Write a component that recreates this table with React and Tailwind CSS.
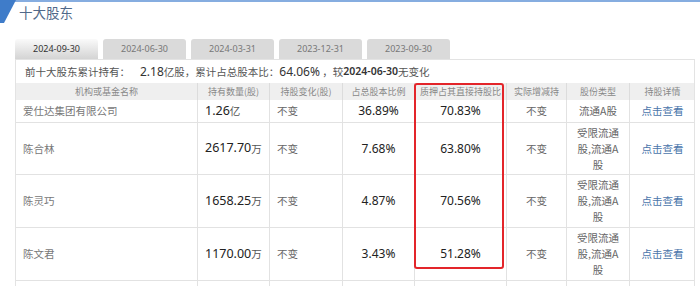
import React from 'react';

const tabs = ['2024-09-30', '2024-06-30', '2024-03-31', '2023-12-31', '2023-09-30'];

const headers = [
  '机构或基金名称',
  '持有数量(股)',
  '持股变化(股)',
  '占总股本比例',
  '质押占其直接持股比',
  '实际增减持',
  '股份类型',
  '持股详情',
];

const rows = [
  { name: '爱仕达集团有限公司', num: '1.26', unit: '亿', ratio: '36.89%', pledge: '70.83%', type: ['流通A股'], h: 'h-[23px]' },
  { name: '陈合林', num: '2617.70', unit: '万', ratio: '7.68%', pledge: '63.80%', type: ['受限流通', '股,流通A', '股'], h: 'h-[52px]' },
  { name: '陈灵巧', num: '1658.25', unit: '万', ratio: '4.87%', pledge: '70.56%', type: ['受限流通', '股,流通A', '股'], h: 'h-[53px]' },
  { name: '陈文君', num: '1170.00', unit: '万', ratio: '3.43%', pledge: '51.28%', type: ['受限流通', '股,流通A', '股'], h: 'h-[53px]' },
];

const cols = 'grid grid-cols-[182px_72px_73px_72px_92px_60px_63px_65px]';
const cjk = "font-['Noto_Sans_CJK_SC',sans-serif]";
const num = "font-['Noto_Sans','Noto_Sans_CJK_SC',sans-serif]";
const cell = 'border-r border-[#e2e2e2]';

const App = () => {
  return (
    <div className={`relative h-[286px] w-[700px] overflow-hidden bg-white ${cjk}`}>
      <div className="h-[2px] w-full bg-[#86ade0]" />
      <svg className="absolute left-0 top-0" width="18" height="24" viewBox="0 0 18 24">
        <polygon points="0,0 16,0 4,23 0,23" fill="#3f7cc9" />
      </svg>

      <div className="pl-[19px] text-[13.5px] leading-[20px] text-[#50698a]">十大股东</div>

      <div className="mt-[17px] flex gap-[5px] pl-[15px]">
        {tabs.map((t, i) => (
          <div
            key={t}
            className={`flex h-[20px] w-[83px] items-center justify-center rounded-t-[3px] text-[9px] ${num} ${
              i === 0
                ? 'bg-gradient-to-b from-[#fafafa] to-[#d4d4d4] text-[#333]'
                : 'bg-[#dadada] text-[#777]'
            }`}
          >
            {t}
          </div>
        ))}
      </div>

      <div className="ml-[15px] w-[680px] border-l border-r border-t border-[#e3e3e3]">
        <div className="flex h-[23px] items-center pl-[9px] text-[10.5px] text-[#555]">
          前十大股东累计持有：
          <span className={`${num} ml-[10px] text-[12px] text-[#333]`}>2.18</span>亿股，累计占总股本比：
          <span className={`${num} text-[12px] text-[#333]`}>64.06%</span>&nbsp;，较
          <span className={`${num} text-[10.5px] font-semibold text-[#333]`}>2024-06-30</span>无变化
        </div>

        <div className={`${cols} h-[17px] bg-[#efefef] text-[9px] leading-[17px] text-[#888]`}>
          {headers.map((h, i) => (
            <div key={h} className={`text-center ${i < headers.length - 1 ? 'border-r border-[#dcdcdc]' : ''}`}>
              {h}
            </div>
          ))}
        </div>

        {rows.map((r) => (
          <div key={r.name} className={`${cols} ${r.h} border-b border-[#e2e2e2] text-[10.5px]`}>
            <div className={`flex items-center ${cell} pl-[7px] text-[#777]`}>{r.name}</div>
            <div className={`flex items-center ${cell} pl-[7px]`}>
              <span className={`${num} text-[12.5px] text-[#222]`}>{r.num}</span>
              <span className="text-[#555]">{r.unit}</span>
            </div>
            <div className={`flex items-center ${cell} pl-[7px] text-[#666]`}>不变</div>
            <div className={`flex items-center justify-center ${cell} text-[12px] text-[#222] ${num}`}>{r.ratio}</div>
            <div className={`flex items-center justify-center ${cell} text-[12px] text-[#222] ${num}`}>{r.pledge}</div>
            <div className={`flex items-center justify-center ${cell} text-[#666]`}>不变</div>
            <div className={`flex flex-col items-center justify-center ${cell} leading-[16px] text-[#666]`}>
              {r.type.map((l) => (
                <span key={l}>{l}</span>
              ))}
            </div>
            <div className="flex items-center justify-center text-[#4a76ab]">点击查看</div>
          </div>
        ))}

        <div className={`${cols} h-[20px]`}>
          {headers.map((h, i) => (
            <div key={h} className={i < headers.length - 1 ? cell : ''} />
          ))}
        </div>
      </div>

      <div className="pointer-events-none absolute left-[414px] top-[83px] h-[186px] w-[90px] rounded-[3px] border-2 border-[#e3252a]" />
    </div>
  );
};

export default App;
